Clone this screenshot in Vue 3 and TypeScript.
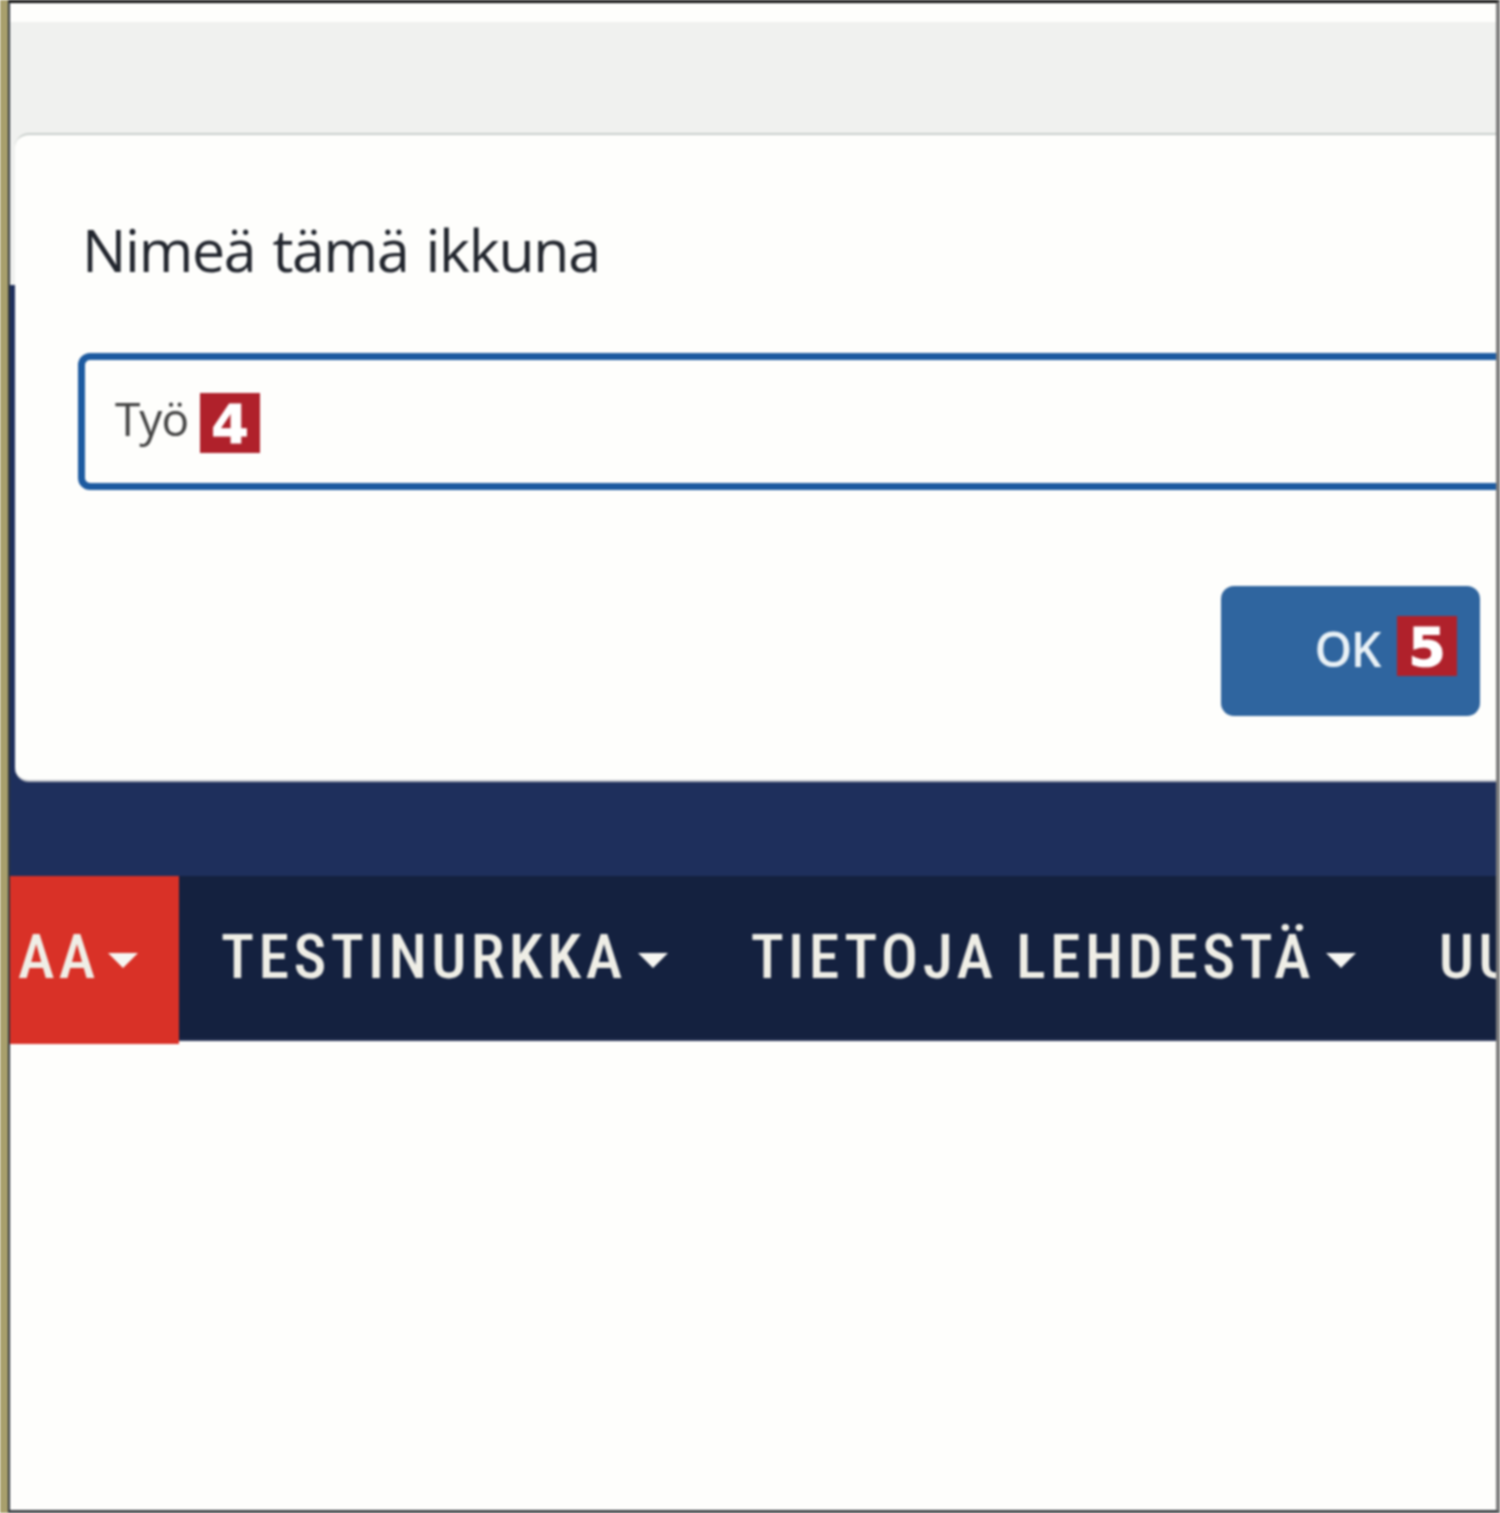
<script setup lang="ts">
const navItems: { label: string; caret: boolean; active?: boolean }[] = [
  { label: 'AA', caret: true, active: true },
  { label: 'TESTINURKKA', caret: true },
  { label: 'TIETOJA LEHDESTÄ', caret: true },
  { label: 'UUTISET', caret: false },
]
</script>

<template>
  <div class="screen">
    <div class="strip"></div>
    <div class="window">
      <div class="page">
        <div class="topline"></div>
        <div class="greyband"></div>
        <div class="navyband"></div>
        <nav class="nav">
          <div v-for="item in navItems" :key="item.label" class="nav-item" :class="{ active: item.active }">
            <span class="nav-label">{{ item.label }}</span>
            <span v-if="item.caret" class="caret"></span>
          </div>
        </nav>
        <div class="rest"></div>

        <div class="modal">
          <h2 class="title">Nimeä tämä ikkuna</h2>
          <div class="input">
            <span class="value">Työ</span>
            <span class="badge">4</span>
          </div>
          <div class="actions">
            <button class="ok" type="button">
              <span class="ok-label">OK</span>
              <span class="badge">5</span>
            </button>
          </div>
        </div>
      </div>
    </div>
  </div>
</template>

<style>
html, body { margin: 0; background: #fefefc; overflow: hidden; }
</style>

<style scoped>
.screen {
  width: 1500px;
  height: 1513px;
  display: flex;
  overflow: hidden;
  background: #a89f6c;
  font-family: "Open Sans", "Noto Sans", sans-serif;
  filter: blur(1.2px);
}
.strip { width: 8px; flex: none; background: #a89f6c; }
.window {
  flex: 1;
  min-width: 0;
  box-sizing: border-box;
  border-top: 3px solid #0c0c0c;
  border-left: 2px solid #30363c;
  border-right: 4px solid #7c7c7c;
  border-bottom: 3px solid #3c3f43;
}
.page {
  position: relative;
  height: 100%;
  display: flex;
  flex-direction: column;
  background: #fefefc;
  overflow: hidden;
}
.topline { height: 19px; flex: none; background: #fefefc; }
.greyband { height: 263px; flex: none; background: #f0f1ef; }
.navyband { height: 591px; flex: none; background: #1e2f5c; }
.nav {
  position: relative;
  height: 165px;
  flex: none;
  display: flex;
  background: #14213f;
  border-bottom: 2px solid #2a3556;
  box-sizing: border-box;
  color: #efeee6;
  font-family: Roboto, "Liberation Sans", sans-serif;
  font-stretch: 75%;
}
.nav-item {
  display: flex;
  align-items: center;
  flex: none;
  padding: 0 41px 0 42px;
  height: 161px;
  box-sizing: border-box;
}
.nav-item.active {
  background: #d93127;
  width: 169px;
  height: 168px;
  padding: 0 0 7px 8px;
}
.nav-label {
  font-size: 62px;
  font-weight: 500;
  letter-spacing: 4.4px;
  line-height: 1;
  white-space: nowrap;
}
.caret {
  width: 0;
  height: 0;
  margin-left: 11px;
  margin-top: 7px;
  border-left: 15px solid transparent;
  border-right: 15px solid transparent;
  border-top: 15px solid #f6f6f2;
}
.active .caret { margin-left: 8px; }
.rest { flex: 1; background: #fefefc; }
.modal {
  position: absolute;
  left: 5px;
  right: 0;
  top: 130px;
  height: 649px;
  box-sizing: border-box;
  background: #fefefc;
  border-top: 2px solid #c9cfcc;
  border-radius: 14px 0 0 14px;
  border-bottom: 2px solid #b9bcc4;
  padding: 0 16px 0 63px;
  overflow: hidden;
}
.title {
  margin: 74px 0 0;
  height: 80px;
  padding-left: 4px;
  font-size: 59px;
  font-weight: 400;
  line-height: 80px;
  color: #22262e;
  letter-spacing: -1.3px;
  word-spacing: 3px;
}
.input {
  margin-top: 64px;
  margin-right: -30px;
  height: 137px;
  box-sizing: border-box;
  border: 7px solid #1c5aa0;
  border-radius: 12px;
  display: flex;
  align-items: center;
  padding-left: 30px;
  gap: 12px;
}
.value {
  font-size: 46px;
  color: #444444;
  letter-spacing: -1px;
  line-height: 1;
  margin-top: -8px;
}
.badge {
  width: 60px;
  height: 60px;
  flex: none;
  display: flex;
  align-items: center;
  justify-content: center;
  background: #b0212b;
  color: #ffffff;
  font-family: "DejaVu Sans", sans-serif;
  font-weight: 700;
  font-size: 54px;
  line-height: 1;
  padding-top: 4px;
  box-sizing: border-box;
  -webkit-text-stroke: 1px #ffffff;
}
.input .badge { margin-top: 2px; }
.actions {
  display: flex;
  justify-content: flex-end;
  margin-top: 96px;
}
.ok {
  width: 259px;
  height: 130px;
  box-sizing: border-box;
  border: none;
  border-radius: 13px;
  background: #2f659f;
  color: #e9f1f6;
  display: flex;
  align-items: center;
  justify-content: flex-end;
  gap: 17px;
  padding: 0 23px 10px 0;
  font-family: inherit;
}
.ok-label {
  font-size: 48px;
  font-weight: 600;
  line-height: 1;
  letter-spacing: -1.5px;
  position: relative;
  top: 3px;
}
</style>
